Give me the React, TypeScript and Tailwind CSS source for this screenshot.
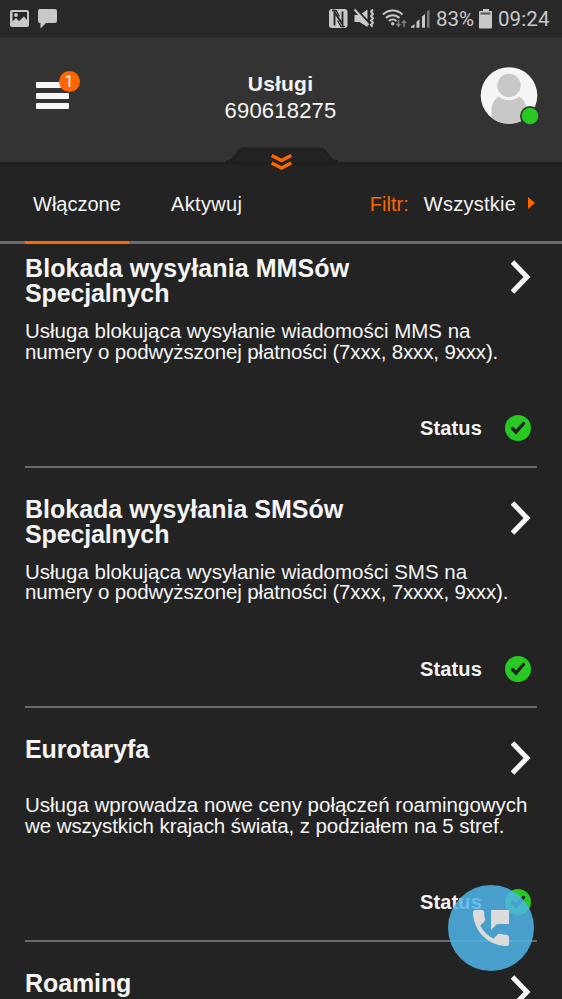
import { MdPermPhoneMsg } from "react-icons/md";

interface Line {
  text: string;
  tracking: string;
}

interface Service {
  id: string;
  title: Line[];
  description: Line[];
}

const services: Service[] = [
  {
    id: "mms",
    title: [
      { text: "Blokada wysyłania MMSów", tracking: "tracking-[0.08px]" },
      { text: "Specjalnych", tracking: "tracking-[-0.15px]" },
    ],
    description: [
      {
        text: "Usługa blokująca wysyłanie wiadomości MMS na",
        tracking: "tracking-[0px]",
      },
      {
        text: "numery o podwyższonej płatności (7xxx, 8xxx, 9xxx).",
        tracking: "tracking-[-0.15px]",
      },
    ],
  },
  {
    id: "sms",
    title: [
      { text: "Blokada wysyłania SMSów", tracking: "tracking-[0px]" },
      { text: "Specjalnych", tracking: "tracking-[-0.15px]" },
    ],
    description: [
      {
        text: "Usługa blokująca wysyłanie wiadomości SMS na",
        tracking: "tracking-[0px]",
      },
      {
        text: "numery o podwyższonej płatności (7xxx, 7xxxx, 9xxx).",
        tracking: "tracking-[-0.15px]",
      },
    ],
  },
  {
    id: "euro",
    title: [{ text: "Eurotaryfa", tracking: "tracking-[-0.1px]" }],
    description: [
      {
        text: "Usługa wprowadza nowe ceny połączeń roamingowych",
        tracking: "tracking-[0px]",
      },
      {
        text: "we wszystkich krajach świata, z podziałem na 5 stref.",
        tracking: "tracking-[-0.07px]",
      },
    ],
  },
  {
    id: "roaming",
    title: [{ text: "Roaming", tracking: "tracking-[-0.1px]" }],
    description: [],
  },
];

function StatusBar() {
  return (
    <div className="flex h-[38px] shrink-0 items-center bg-[#282828] pl-[10px] text-[#c8c8c8]">
      <svg width="48" height="22" viewBox="0 0 48 22" fill="currentColor">
        <path
          fillRule="evenodd"
          d="M2 2h15a2 2 0 0 1 2 2v13a2 2 0 0 1-2 2H2a2 2 0 0 1-2-2V4a2 2 0 0 1 2-2ZM2.500 4v9.500L6 10l3 3 5-4.500 3 3.500V4Z"
        />
        <circle cx="6" cy="7" r="1.900" />
        <path d="M30 1h15a2 2 0 0 1 2 2v10a2 2 0 0 1-2 2H36l-5.500 5.500V15H30a2 2 0 0 1-2-2V3a2 2 0 0 1 2-2Z" />
      </svg>

      {/* NFC, mute, wifi, signal */}
      <svg
        className="ml-auto"
        width="102"
        height="24"
        viewBox="328 7 102 24"
        fill="currentColor"
      >
        <rect x="329" y="9" width="18.500" height="19" rx="3" />
        <path
          d="M334.500 25.500V12L342.500 24.500V11.500"
          fill="none"
          stroke="#282828"
          strokeWidth="1.900"
        />
        <path d="M332 10.500h4l3.500 6" fill="none" stroke="#282828" strokeWidth="1.400" />
        <path d="M345 26.500h-4l-3.500-6" fill="none" stroke="#282828" strokeWidth="1.400" />
        <path d="M354.500 15h5l8-5.500v17.500L359.500 22h-5Z" />
        <path d="M356 9l14 14.500" stroke="#282828" strokeWidth="2" />
        <path d="M354.500 9.500l14 15.500" stroke="currentColor" strokeWidth="2" />
        <path
          d="M373 9.500l-2 2.200 2 2.200-2 2.200 2 2.200-2 2.200 2 2.200-2 2.200 1.500 2"
          fill="none"
          stroke="currentColor"
          strokeWidth="2"
        />
        <g fill="none" stroke="currentColor" strokeWidth="2.100">
          <path d="M383 14.500a14 14 0 0 1 19.500 0" />
          <path d="M386 18a9.500 9.500 0 0 1 13.500 0" />
          <path d="M389 21a5.500 5.500 0 0 1 7.500 0" />
        </g>
        <circle cx="392.700" cy="23.700" r="1.700" />
        <path
          d="M398.500 20v6m-2-2 2 2.200 2-2.200M404 27v-6m-2 2 2-2.200 2 2.200"
          fill="none"
          stroke="#808080"
          strokeWidth="1.500"
        />
        <path d="M411 27.700v-1l3.500-2.700v3.700ZM416.500 27.700v-6l3-2.400v8.400ZM422 27.700V16.500l3-2.500v13.700Z" />
        <path d="M427 27.700V11.500l2.500-2v18.200Z" fill="#777" />
      </svg>
      <span className="ml-[6px] w-[38px] font-['Roboto'] text-[20.5px] leading-none whitespace-nowrap">
        83%
      </span>
      <svg
        className="ml-[5px]"
        width="14"
        height="20"
        viewBox="0 0 14 20"
        fill="currentColor"
      >
        <path d="M4 0h6v2h2.500a1 1 0 0 1 .500 1v15.500a1 1 0 0 1-1 1H1a1 1 0 0 1-1-1V3a1 1 0 0 1 1-1h3Z" />
        <path d="M1.500 3.500h10v2h-10Z" fill="#555" />
      </svg>
      <span className="ml-[5px] w-[64px] font-['Roboto'] text-[20.5px] leading-none tracking-[0.1px] whitespace-nowrap">
        09:24
      </span>
    </div>
  );
}

function Header() {
  return (
    <header className="relative flex h-[124px] shrink-0 justify-between bg-[#333333]">
      <button className="relative mt-[44px] ml-[36px] flex h-[27px] w-[33px] flex-col justify-between">
        <span className="h-[6px] w-full rounded-[1px] bg-[#f7f7f7]" />
        <span className="h-[6px] w-full rounded-[1px] bg-[#f7f7f7]" />
        <span className="h-[6px] w-full rounded-[1px] bg-[#f7f7f7]" />
        <span className="absolute -top-[11px] left-[22.5px] flex size-[21px] items-center justify-center rounded-full bg-[#ff6600] font-['Roboto'] text-[16px] leading-none text-white">
          1
        </span>
      </button>

      <div className="ml-[12px] pt-[32px] text-center text-[#f5f5f5]">
        <h1 className="text-[21px] leading-[27px] font-bold tracking-[0.2px]">
          Usługi
        </h1>
        <p className="text-[22px] leading-[27px] tracking-[0.2px]">690618275</p>
      </div>

      <svg
        className="mt-[28px] mr-[22px]"
        width="60"
        height="60"
        viewBox="0 0 60 60"
      >
        <clipPath id="avatar">
          <circle cx="29" cy="29.500" r="28.300" />
        </clipPath>
        <circle cx="29" cy="29.500" r="28.300" fill="#f5f5f5" />
        <g clipPath="url(#avatar)" fill="#c8c8c8">
          <circle cx="29" cy="19.500" r="11.700" />
          <path d="M19 30.500a15 15 0 0 0 20 0q7.500 4 7.500 14V60h-35V44.500q0-10 7.500-14Z" />
        </g>
        <circle cx="50" cy="50" r="10" fill="#333333" />
        <circle cx="50" cy="50" r="8.300" fill="#27c922" />
      </svg>

      {/* pull-down tab */}
      <svg
        className="absolute bottom-0 left-[226px]"
        width="112"
        height="16"
        viewBox="0 0 112 16"
      >
        <path
          d="M0 14C6 14 6 12 8.500 9S12 1.500 18 1.500H94C100 1.500 101 6 103.500 9S106 14 112 14V16H0Z"
          fill="#1f1f1f"
        />
        <path
          d="M4 16C8 15.500 8 14 11 11S14 4.500 19 4.500H93C98 4.500 98 8 101 11S104 15.500 108 16Z"
          fill="#232323"
        />
      </svg>
    </header>
  );
}

function Tabs() {
  return (
    <nav className="relative flex h-[82px] shrink-0 border-b-[3px] border-[#6c6c6c] bg-linear-to-b from-[#1e1e1e] to-[#232323] to-[5px] text-[20px] leading-[24px] text-[#f5f5f5]">
      <svg
        className="absolute -top-[8px] left-[271px]"
        width="21"
        height="18"
        viewBox="0 0 21 18"
        fill="none"
        stroke="#ff6600"
        strokeWidth="3.400"
      >
        <path d="M.700 1.500 10.500 6.500 20.300 1.500M.700 9 10.500 14 20.300 9" />
      </svg>
      <div className="relative ml-[25px] w-[104px] pt-[30px] pl-[8px]">
        <span className="whitespace-nowrap">Włączone</span>
        <span className="absolute -bottom-[3px] left-0 h-[3px] w-full bg-[#ff6600]" />
      </div>
      <span className="ml-[42px] pt-[30px] tracking-[0.35px]">Aktywuj</span>
      <div className="mr-[27px] ml-auto flex pt-[30px]">
        <span className="text-[#ff6600]">Filtr:</span>
        <span className="ml-[15px] tracking-[0.25px]">Wszystkie</span>
        <svg
          className="mt-[5px] ml-[12px]"
          width="7"
          height="12"
          viewBox="0 0 7 12"
          fill="#ff6600"
        >
          <path d="M0 0 7 6 0 12Z" />
        </svg>
      </div>
    </nav>
  );
}

function ServiceCard({ service }: { service: Service }) {
  const single = service.title.length === 1;

  return (
    <article
      className={`mx-[25px] shrink-0 border-b-2 border-[#6a6a6a] pt-[29px] ${single ? "h-[234px]" : "h-[240.5px]"}`}
    >
      <div
        className={`flex justify-between ${single ? "h-[55px]" : "h-[62px]"}`}
      >
        <h2 className="text-[25px] leading-[25px] font-bold whitespace-nowrap">
          {service.title.map((line) => (
            <span key={line.text} className={`block ${line.tracking}`}>
              {line.text}
            </span>
          ))}
        </h2>
        <svg
          className="mt-[4px] mr-[6px] shrink-0"
          width="21"
          height="34"
          viewBox="0 0 21 34"
          fill="none"
          stroke="#f7f7f7"
          strokeWidth="5"
        >
          <path d="M2.500 2 17 17 2.500 32" />
        </svg>
      </div>
      {service.description.length > 0 && (
        <>
          <p className="h-[97px] pt-[3px] text-[20.5px] leading-[20.5px] whitespace-nowrap">
            {service.description.map((line) => (
              <span key={line.text} className={`block ${line.tracking}`}>
                {line.text}
              </span>
            ))}
          </p>
          <div className="flex items-center justify-end pr-[6px]">
            <span className="mr-[23px] text-[20px] leading-[26px] font-bold tracking-[0.15px]">
              Status
            </span>
            <svg width="26" height="26" viewBox="0 0 26 26">
              <circle cx="13" cy="13" r="13" fill="#27c922" />
              <path
                d="m7.500 13.500 3.500 3.500 7.500-8.500"
                fill="none"
                stroke="#232323"
                strokeWidth="3.400"
                strokeLinecap="round"
              />
            </svg>
          </div>
        </>
      )}
    </article>
  );
}

export default function App() {
  return (
    <div className="relative flex h-[999px] w-[562px] flex-col overflow-hidden bg-[#232323] font-['Liberation_Sans',Arial,sans-serif] text-[#f5f5f5]">
      <StatusBar />
      <Header />
      <Tabs />
      <main className="min-h-0 flex-1 overflow-hidden">
        <div className="-mt-[17px] flex flex-col">
          {services.map((service) => (
            <ServiceCard key={service.id} service={service} />
          ))}
        </div>
      </main>
      <button className="absolute top-[885px] left-[448px] flex size-[86px] items-center justify-center rounded-full bg-[#4fb5ea]/85 text-[#dcdcdc]">
        <MdPermPhoneMsg size={48} />
      </button>
    </div>
  );
}
